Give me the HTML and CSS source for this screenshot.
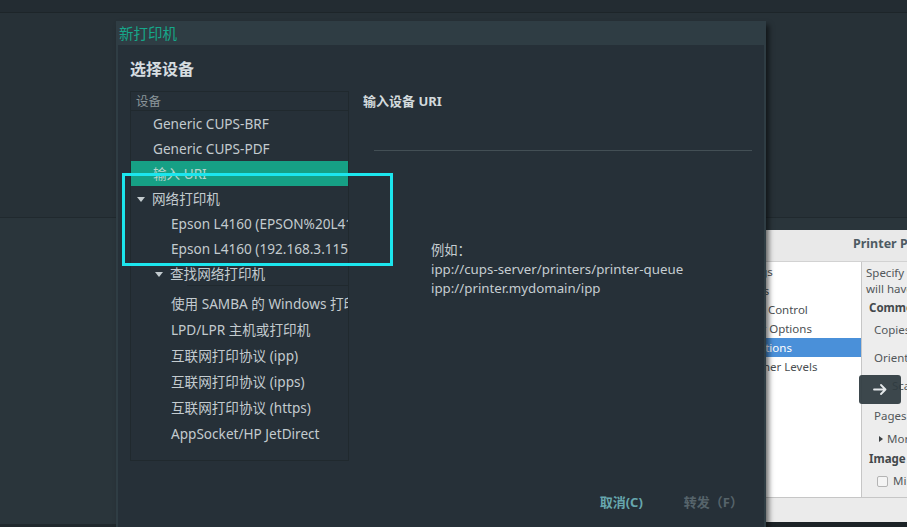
FILE: index.html
```html
<!DOCTYPE html>
<html lang="zh-CN">
<head>
<meta charset="utf-8">
<title>新打印机</title>
<link rel="stylesheet" href="styles.css">
</head>
<body>
<div class="screen">
  <div class="topbar"></div>
  <div class="desktop">
    <div class="band-top"></div>
    <div class="band-bottom"></div>
  </div>

  <div class="props-window">
    <div class="pw-title">Printer Properties</div>
    <div class="pw-content">
      <ul class="pw-nav">
        <li>Settings</li>
        <li>Policies</li>
        <li>Access Control</li>
        <li>Printer Options</li>
        <li class="sel">Job Options</li>
        <li>Ink/Toner Levels</li>
      </ul>
      <div class="pw-main">
        <p class="pw-desc">Specify the default job options for this printer. Jobs<br>will have these options set.</p>
        <p class="pw-sect">Common Options</p>
        <p class="pw-row r-copies">Copies:</p>
        <p class="pw-row r-orient">Orientation:</p>
        <p class="pw-row r-scale">Scale to fit</p>
        <p class="pw-row r-pages">Pages per side:</p>
        <p class="pw-row r-more"><span class="pw-tri"></span>More</p>
        <p class="pw-sect r-img">Image Options</p>
        <p class="pw-row r-mirror"><span class="pw-check"></span>Mirror</p>
      </div>
    </div>
    <div class="pw-bottom"></div>
  </div>

  <div class="arrow-btn">
    <svg width="14" height="11" viewBox="0 0 14 11"><path d="M1 5.5H12.5M8 1L12.5 5.5L8 10" fill="none" stroke="#e4e8ea" stroke-width="1.8" stroke-linecap="round" stroke-linejoin="round"/></svg>
  </div>

  <div class="dialog">
    <div class="dlg-title">新打印机</div>
    <div class="dlg-body">
      <h1 class="dlg-heading">选择设备</h1>
      <div class="dlg-main">
        <div class="dev-list">
          <div class="dev-header">设备</div>
          <div class="dev-row l1">Generic CUPS-BRF</div>
          <div class="dev-row l1">Generic CUPS-PDF</div>
          <div class="dev-row l1 selected">输入 URI</div>
          <div class="dev-row l1 group"><span class="tri"></span>网络打印机</div>
          <div class="dev-row l2">Epson L4160 (EPSON%20L4160%20Series)</div>
          <div class="dev-row l2">Epson L4160 (192.168.3.115)</div>
          <div class="dev-row l2 group sub"><span class="tri"></span>查找网络打印机</div>
          <div class="dev-gap"></div>
          <div class="dev-row l2 tall">使用 SAMBA 的 Windows 打印机</div>
          <div class="dev-row l2 tall">LPD/LPR 主机或打印机</div>
          <div class="dev-row l2 tall">互联网打印协议 (ipp)</div>
          <div class="dev-row l2 tall">互联网打印协议 (ipps)</div>
          <div class="dev-row l2 tall">互联网打印协议 (https)</div>
          <div class="dev-row l2 tall">AppSocket/HP JetDirect</div>
        </div>
        <div class="uri-panel">
          <div class="uri-heading">输入设备 URI</div>
          <div class="uri-rule"></div>
          <div class="uri-examples">
            <div>例如：</div>
            <div>ipp://cups-server/printers/printer-queue</div>
            <div>ipp://printer.mydomain/ipp</div>
          </div>
        </div>
      </div>
      <div class="dlg-footer">
        <span class="btn btn-cancel">取消(C)</span>
        <span class="btn btn-forward">转发（F）</span>
      </div>
    </div>
  </div>

  <div class="highlight"></div>
</div>
</body>
</html>
```

FILE: styles.css
```css
* { box-sizing: border-box; }
html, body { margin: 0; padding: 0; }
body {
  width: 907px;
  height: 527px;
  overflow: hidden;
  background: #283238;
  font-family: "Noto Sans", "Noto Sans CJK SC", sans-serif;
}
p { margin: 0; }
ul { margin: 0; padding: 0; list-style: none; }

.screen {
  position: relative;
  width: 907px;
  height: 527px;
  overflow: hidden;
  display: flex;
  flex-direction: column;
}

.topbar {
  height: 13px;
  background: #232c32;
  border-bottom: 1px solid #1d2529;
  flex: none;
}
.desktop {
  flex: 1;
  display: flex;
  flex-direction: column;
}
.band-top {
  height: 205px;
  background: #273137;
  border-bottom: 1px solid #20292e;
}
.band-bottom {
  flex: 1;
  background: #2a353b;
  border-bottom: 3px solid #20282d;
}

/* ---------- back window (printer properties) ---------- */
.props-window {
  position: absolute;
  left: 720px;
  top: 230px;
  width: 420px;
  height: 297px;
  background: #ededed;
  border-bottom: 5px solid #1c2327;
  display: flex;
  flex-direction: column;
  font-family: "Noto Sans", sans-serif;
  font-size: 11.5px;
  color: #4a4f52;
}
.pw-title {
  height: 32px;
  flex: none;
  background: #e9e9e9;
  border-bottom: 1px solid #d2d2d2;
  padding-left: 133px;
  line-height: 26px;
  padding-top: 1px;
  font-weight: 700;
  font-size: 12.5px;
  color: #4e5b63;
  white-space: nowrap;
}
.pw-content {
  flex: 1;
  display: flex;
}
.pw-nav {
  flex: none;
  width: 142px;
  background: #ffffff;
  border-right: 1px solid #c6c6c6;
}
.pw-nav li {
  height: 19px;
  line-height: 19px;
  padding-left: 9px;
  white-space: nowrap;
  color: #4b4f52;
}
.pw-nav li.sel {
  background: #4a90d9;
  color: #ffffff;
}
.pw-main {
  flex: 1;
  padding: 3px 0 0 4px;
  white-space: nowrap;
  color: #52575a;
}
.pw-desc { line-height: 16px; }
.pw-sect { font-weight: 700; margin-top: 3px; margin-left: 3px; line-height: 16px; color: #43484b; }
.pw-row { margin-left: 8px; line-height: 16px; }
.r-copies { margin-top: 6px; }
.r-orient { margin-top: 12px; }
.r-scale { margin-top: 12px; margin-left: 26px; }
.r-pages { margin-top: 14px; }
.r-more { margin-top: 7px; margin-left: 13px; }
.r-img { margin-top: 4px; }
.r-mirror { margin-top: 6px; margin-left: 11px; display: flex; align-items: center; }
.pw-tri {
  display: inline-block;
  width: 0; height: 0;
  border-top: 3.5px solid transparent;
  border-bottom: 3.5px solid transparent;
  border-left: 4px solid #3c4144;
  margin-right: 4px;
  vertical-align: 1px;
}
.pw-check {
  display: inline-block;
  width: 11px;
  height: 11px;
  border: 1px solid #b4b4b4;
  border-radius: 2px;
  background: #f4f4f4;
  margin-right: 5px;
}
.pw-bottom {
  height: 25px;
  flex: none;
  background: #ebebeb;
  border-top: 1px solid #c6c6c6;
}

.arrow-btn {
  position: absolute;
  left: 859px;
  top: 375px;
  width: 42px;
  height: 29px;
  border-radius: 3px;
  background: rgba(46, 58, 64, 0.93);
  display: flex;
  align-items: center;
  justify-content: center;
}

/* ---------- dialog ---------- */
.dialog {
  position: absolute;
  left: 116px;
  top: 21px;
  width: 650px;
  height: 520px;
  background: #2f3d44;
  box-shadow: 3px 4px 5px rgba(0, 0, 0, 0.55);
  display: flex;
  flex-direction: column;
  padding: 0 2px;
}
.dlg-title {
  height: 24px;
  flex: none;
  line-height: 24px;
  padding-left: 1px;
  font-size: 14.5px;
  color: #16a78a;
  font-family: "Noto Sans CJK SC", sans-serif;
}
.dlg-body {
  flex: 1;
  background: #263038;
  padding: 12px 12px 0 12px;
  display: flex;
  flex-direction: column;
}
.dlg-heading {
  margin: 0;
  font-size: 16px;
  line-height: 22px;
  font-weight: 700;
  color: #d6dde0;
  font-family: "Noto Sans CJK SC", sans-serif;
}
.dlg-main {
  display: flex;
  margin-top: 12px;
  height: 370px;
}
.dev-list {
  width: 219px;
  height: 370px;
  border: 1px solid #20292e;
  overflow: hidden;
  font-size: 13.6px;
  color: #c3cbcf;
}
.dev-header {
  height: 19px;
  line-height: 20px;
  padding-left: 5px;
  font-size: 12.5px;
  color: #8b969b;
  border-bottom: 1px solid #20292e;
}
.dev-row {
  height: 25px;
  line-height: 26px;
  white-space: nowrap;
  overflow: hidden;
}
.dev-row.l1 { padding-left: 22px; }
.dev-row.l2 { padding-left: 40px; }
.dev-row.group.l1 { padding-left: 6px; }
.dev-row.group.l2 { padding-left: 24px; }
.dev-row.tall { height: 26px; line-height: 27px; }
.dev-row.selected {
  background: #16a085;
  color: #b6d4cd;
}
.dev-row.sub { position: relative; }
.dev-row.sub::after {
  content: "";
  position: absolute;
  left: 56px;
  right: 0;
  bottom: 0;
  border-bottom: 1px solid #20292e;
}
.dev-gap { height: 4px; }
.tri {
  display: inline-block;
  width: 0; height: 0;
  border-left: 4.5px solid transparent;
  border-right: 4.5px solid transparent;
  border-top: 5px solid #c3cbcf;
  margin-right: 7px;
  vertical-align: 2px;
}

.uri-panel {
  flex: 1;
  margin-left: 14px;
  display: flex;
  flex-direction: column;
}
.uri-heading {
  line-height: 20px;
  font-size: 13px;
  font-weight: 700;
  color: #d3dadd;
}
.uri-rule {
  margin: 39px 0 0 11px;
  border-top: 1px solid #434f55;
}
.uri-examples {
  margin: 90px 0 0 68px;
  font-size: 13.3px;
  line-height: 19px;
  color: #c5cdd1;
}

.dlg-footer {
  display: flex;
  justify-content: flex-end;
  gap: 41px;
  margin-top: 31px;
  padding-right: 9px;
  line-height: 20px;
}
.btn {
  font-size: 13px;
  font-weight: 700;
}
.btn-cancel { color: #67a7ae; }
.btn-forward { color: #56646b; }

.highlight {
  position: absolute;
  left: 122px;
  top: 173px;
  width: 271px;
  height: 93px;
  border: 3px solid #1ce6ee;
}
```
